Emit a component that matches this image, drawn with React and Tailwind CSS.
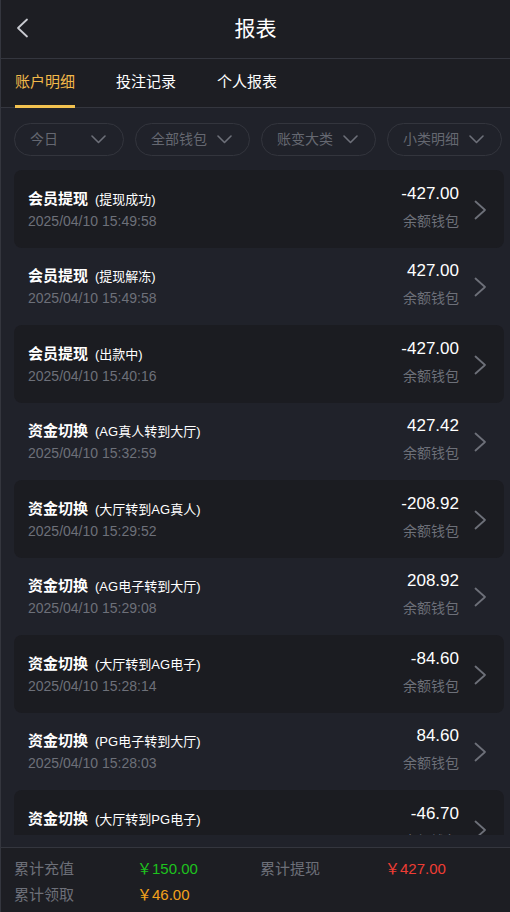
import React from 'react';

const font = { fontFamily: '"Liberation Sans", "Noto Sans CJK SC", sans-serif' };

const records = [
  { title: '会员提现', sub: '(提现成功)', time: '2025/04/10 15:49:58', amount: '-427.00' },
  { title: '会员提现', sub: '(提现解冻)', time: '2025/04/10 15:49:58', amount: '427.00' },
  { title: '会员提现', sub: '(出款中)', time: '2025/04/10 15:40:16', amount: '-427.00' },
  { title: '资金切换', sub: '(AG真人转到大厅)', time: '2025/04/10 15:32:59', amount: '427.42' },
  { title: '资金切换', sub: '(大厅转到AG真人)', time: '2025/04/10 15:29:52', amount: '-208.92' },
  { title: '资金切换', sub: '(AG电子转到大厅)', time: '2025/04/10 15:29:08', amount: '208.92' },
  { title: '资金切换', sub: '(大厅转到AG电子)', time: '2025/04/10 15:28:14', amount: '-84.60' },
  { title: '资金切换', sub: '(PG电子转到大厅)', time: '2025/04/10 15:28:03', amount: '84.60' },
  { title: '资金切换', sub: '(大厅转到PG电子)', time: '2025/04/10 15:27:40', amount: '-46.70' },
];

const filters = [
  { label: '今日', w: 'w-[110px]' },
  { label: '全部钱包', w: 'w-[115px]' },
  { label: '账变大类', w: 'w-[115px]' },
  { label: '小类明细', w: 'w-[115px]' },
];

const ChevronDown = () => (
  <svg width="15" height="9" viewBox="0 0 15 9" fill="none" stroke="#6d7079" strokeWidth="1.6" strokeLinecap="round" strokeLinejoin="round">
    <polyline points="1,1 7.5,7.5 14,1" />
  </svg>
);

const ChevronRight = () => (
  <svg width="13" height="20" viewBox="0 0 13 20" fill="none" stroke="#6d7079" strokeWidth="1.8" strokeLinecap="round" strokeLinejoin="round">
    <polyline points="1.5,1.5 11,10 1.5,18.5" />
  </svg>
);

const RecordRow = ({ rec, dark }) => (
  <div className={`h-[77.5px] ml-[13px] mr-[6px] rounded-lg flex items-center ${dark ? 'bg-[#1b1c21]' : ''}`}>
    <div className="flex-1 pl-[14px] pt-[1px]">
      <div className="flex items-baseline text-white leading-none">
        <span className="text-[15px] font-bold">{rec.title}</span>
        <span className="text-[13px] ml-[7px]">{rec.sub}</span>
      </div>
      <div className="text-[14px] text-[#6d7079] mt-[8px] leading-none">{rec.time}</div>
    </div>
    <div className="flex flex-col items-end -mt-[5px]">
      <div className="text-[17px] text-white leading-none">{rec.amount}</div>
      <div className="text-[14px] text-[#6d7079] mt-[12px] leading-none">余额钱包</div>
    </div>
    <div className="ml-[15px] mr-[17px] mt-[2px] flex">
      <ChevronRight />
    </div>
  </div>
);

export default function App() {
  return (
    <div style={font} className="w-[510px] h-[912px] flex flex-col bg-[#20222a] border-l border-[#34363e] overflow-hidden">
      {/* header */}
      <div className="h-[59px] shrink-0 bg-[#1d1e23] border-b border-[#34363e] flex items-center px-[15px]">
        <svg width="13" height="20" viewBox="0 0 13 20" fill="none" stroke="#c9cbd1" strokeWidth="1.8" strokeLinecap="round" strokeLinejoin="round" className="-mt-[3px]">
          <polyline points="11,1.5 2,10 11,18.5" />
        </svg>
        <span className="flex-1 text-center text-white text-[21px] -mt-[1px] mr-[13px]">报表</span>
      </div>

      {/* tabs */}
      <div className="h-[49px] shrink-0 bg-[#1d1e23] border-b border-[#34363e] flex items-stretch pl-[14px] gap-[41px]">
        <div className="relative flex items-center text-[15px] text-[#f2b94a] -mt-[1px]">
          账户明细
          <div className="absolute left-0 right-0 bottom-[-1px] h-[3px] bg-[#f2c250]" />
        </div>
        <div className="flex items-center text-[15px] text-white -mt-[1px]">投注记录</div>
        <div className="flex items-center text-[15px] text-white -mt-[1px]">个人报表</div>
      </div>

      {/* filters */}
      <div className="shrink-0 flex gap-[11px] pl-[13px] pt-[15px] pb-[14px]">
        {filters.map((f) => (
          <div key={f.label} className={`${f.w} h-[33px] shrink-0 rounded-full border border-[#33353d] flex items-center justify-between pl-[15px] pr-[17px]`}>
            <span className="text-[14px] text-[#656871]">{f.label}</span>
            <ChevronDown />
          </div>
        ))}
      </div>

      {/* list */}
      <div className="flex-1 overflow-hidden mb-[12px]">
        {records.map((r, i) => (
          <RecordRow key={i} rec={r} dark={i % 2 === 0} />
        ))}
      </div>

      {/* footer */}
      <div className="h-[65px] shrink-0 bg-[#1d1e23] border-t border-[#34363e] pl-[13px] pt-[10px] text-[15px] leading-none">
        <div className="flex items-center h-[20px]">
          <span className="w-[123px] text-[#6d7079]">累计充值</span>
          <span className="w-[123px] text-[#1ec21e]">￥150.00</span>
          <span className="w-[125px] text-[#6d7079]">累计提现</span>
          <span className="text-[#ee3d34]">￥427.00</span>
        </div>
        <div className="flex items-center h-[20px] mt-[6px]">
          <span className="w-[123px] text-[#6d7079]">累计领取</span>
          <span className="text-[#f3a21c]">￥46.00</span>
        </div>
      </div>
    </div>
  );
}
